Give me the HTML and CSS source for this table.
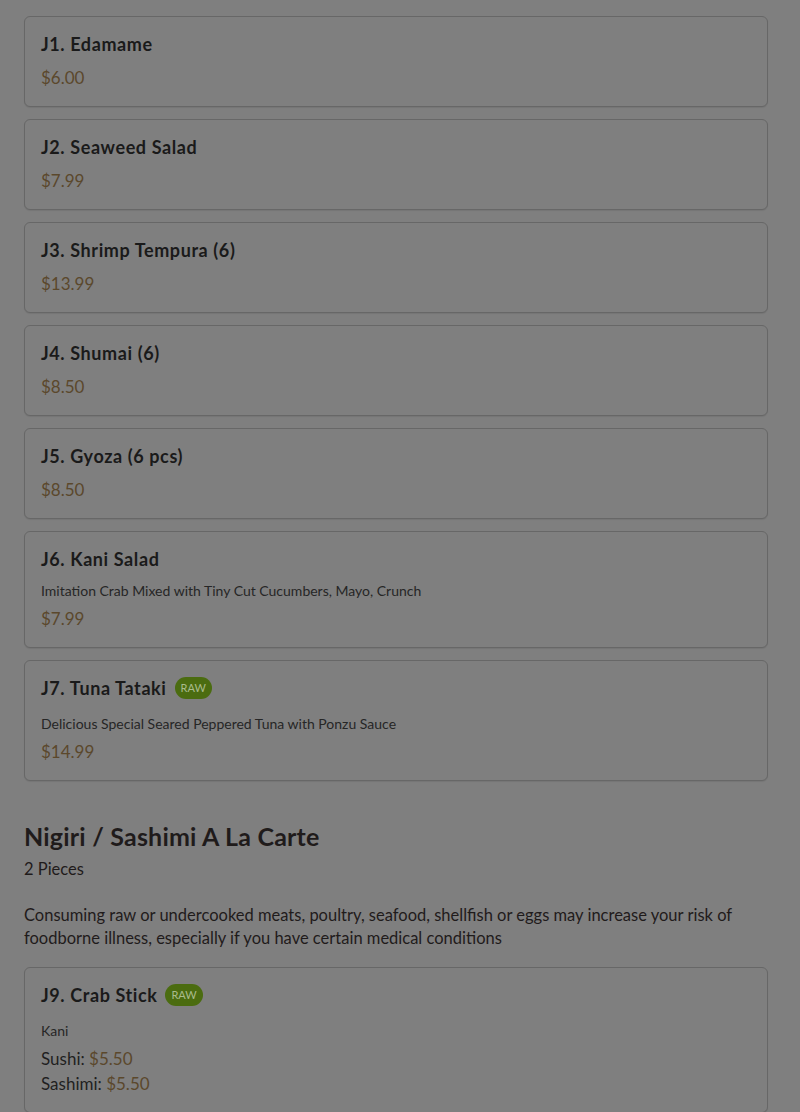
FILE: index.html
```html
<!DOCTYPE html>
<html lang="en">
<head>
<meta charset="utf-8">
<title>Menu</title>
<link rel="stylesheet" href="styles.css">
</head>
<body>
<main class="menu">
  <section class="list">
    <article class="card">
      <div class="title-row"><h3 class="title">J1. Edamame</h3></div>
      <div class="price">$6.00</div>
    </article>
    <article class="card">
      <div class="title-row"><h3 class="title">J2. Seaweed Salad</h3></div>
      <div class="price">$7.99</div>
    </article>
    <article class="card">
      <div class="title-row"><h3 class="title">J3. Shrimp Tempura (6)</h3></div>
      <div class="price">$13.99</div>
    </article>
    <article class="card">
      <div class="title-row"><h3 class="title">J4. Shumai (6)</h3></div>
      <div class="price">$8.50</div>
    </article>
    <article class="card">
      <div class="title-row"><h3 class="title">J5. Gyoza (6 pcs)</h3></div>
      <div class="price">$8.50</div>
    </article>
    <article class="card">
      <div class="title-row"><h3 class="title">J6. Kani Salad</h3></div>
      <p class="desc">Imitation Crab Mixed with Tiny Cut Cucumbers, Mayo, Crunch</p>
      <div class="price">$7.99</div>
    </article>
    <article class="card">
      <div class="title-row tall"><h3 class="title">J7. Tuna Tataki</h3><span class="badge">RAW</span></div>
      <p class="desc">Delicious Special Seared Peppered Tuna with Ponzu Sauce</p>
      <div class="price">$14.99</div>
    </article>
  </section>

  <section class="category">
    <h2 class="cat-title">Nigiri / Sashimi A La Carte</h2>
    <p class="cat-sub">2 Pieces</p>
    <p class="cat-note">Consuming raw or undercooked meats, poultry, seafood, shellfish or eggs may increase your risk of foodborne illness, especially if you have certain medical conditions</p>
  </section>

  <section class="list">
    <article class="card">
      <div class="title-row tall"><h3 class="title">J9. Crab Stick</h3><span class="badge">RAW</span></div>
      <p class="desc">Kani</p>
      <div class="price"><span class="plabel">Sushi:</span> $5.50</div>
      <div class="price"><span class="plabel">Sashimi:</span> $5.50</div>
    </article>
  </section>
</main>
</body>
</html>
```

FILE: styles.css
```css
html, body {
  margin: 0;
  padding: 0;
  background: #7f7f7f;
}
body {
  font-family: Lato, "Noto Sans", sans-serif;
  color: #1b1b1b;
}
.menu {
  padding: 16px 32px 0 24px;
}
.list {
  display: flex;
  flex-direction: column;
  gap: 12px;
}
.card {
  border: 1px solid #676767;
  border-radius: 6px;
  padding: 16px;
  background: #7f7f7f;
  box-shadow: 0 1px 1px rgba(0,0,0,0.08);
}
.title-row {
  display: flex;
  align-items: center;
  height: 22px;
}
.title {
  margin: 0;
  font-size: 18px;
  font-weight: 700;
  line-height: 22px;
  letter-spacing: 0.6px;
  color: #1a1a1a;
}
.badge {
  margin-left: 8px;
  height: 22px;
  padding: 0 6px;
  border-radius: 11px;
  background: #4b6c10;
  color: #a9bb8c;
  font-size: 11px;
  line-height: 22px;
  font-weight: 400;
}
.desc {
  margin: 10px 0 5px;
  font-size: 14px;
  line-height: 21px;
  color: #262626;
}
.title-row.tall + .desc {
  margin-top: 14px;
}
.title-row + .price {
  margin-top: 10px;
}
.price {
  font-size: 17px;
  line-height: 25px;
  color: #5b482c;
}
.plabel {
  color: #1f1f1f;
}
.category {
  padding: 38px 0 17px;
  color: #1f1b1b;
}
.cat-title {
  margin: 0;
  font-size: 25px;
  line-height: 34px;
  font-weight: 700;
  letter-spacing: 0.2px;
}
.cat-sub {
  margin: 4px 0 0;
  font-size: 16.5px;
  line-height: 24px;
}
.cat-note {
  margin: 23px 0 0;
  font-size: 16.5px;
  line-height: 23px;
}
```
